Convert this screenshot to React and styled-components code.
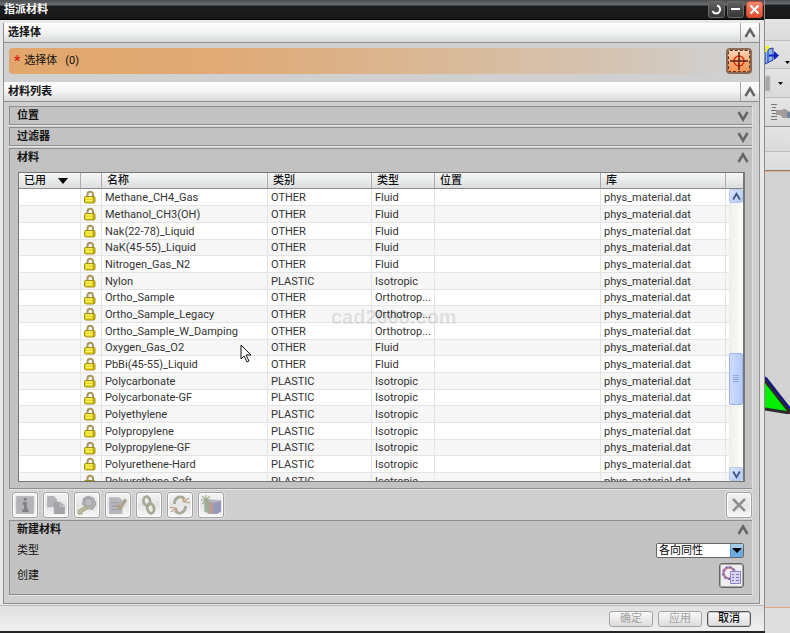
import { useState } from "react";
import styled, { createGlobalStyle, css } from "styled-components";

const GlobalStyle = createGlobalStyle`
  * {
    box-sizing: border-box;
  }

  body {
    margin: 0;
    font-family: Roboto, "Noto Sans CJK SC", sans-serif;
    font-size: 11px;
    line-height: 16px;
    color: #111;
    overflow: hidden;
  }

  button,
  select {
    font: inherit;
    color: inherit;
    margin: 0;
    padding: 0;
  }
`;

const Desktop = styled.div`
  position: relative;
  display: flex;
  height: 100vh;
  background: #242424;
`;

const Dialog = styled.main`
  flex: 1;
  min-width: 0;
  display: flex;
  flex-direction: column;
  margin-bottom: 2px;
  background: #e8e8e8;
  border-right: 1px solid #8c8c8c;
`;

const TitleBar = styled.header`
  display: flex;
  align-items: center;
  gap: 2px;
  height: 20px;
  padding: 0 1px 0 4px;
  background: linear-gradient(#4a4e50 0, #6a6e70 5px, #1c1c1c 6px, #181818 100%);
  border-bottom: 1px solid #000;
`;

const Title = styled.h1`
  flex: 1;
  margin: 0;
  font-size: 11px;
  color: #fff;
`;

const TitleButton = styled.button`
  display: grid;
  place-items: center;
  width: 17px;
  height: 17px;
  border: 1px solid ${({ $close }) => ($close ? "#c8462e" : "#6a6a6a")};
  border-radius: 3px;
  background: ${({ $close }) =>
		$close
			? "linear-gradient(#f08a70, #e04e30)"
			: "linear-gradient(#606060, #363636)"};
`;

const Body = styled.div`
  flex: 1;
  min-height: 0;
  display: flex;
  flex-direction: column;
  margin: 3px 4px 0 3px;
  border: solid #8e8e8e;
  border-width: 0 1px 1px 1px;
  background: #cfcfcf;
`;

const SectionHead = styled.div`
  display: flex;
  height: 20px;
  padding-left: 4px;
  background: linear-gradient(#fdfdfd, #f2f3f3 50%, #d6d8d9);
  border-bottom: 1px solid #8e8e8e;
`;

const Heading = styled.h2`
  flex: 1;
  margin: 0;
  font-size: 11px;
  line-height: ${({ $line }) => $line || 19}px;
`;

const FoldButton = styled.button`
  display: grid;
  place-items: center;
  width: 19px;
  border: 0;
  background: none;
  ${({ $ruled }) =>
		$ruled &&
		css`
      border-left: 1px solid #a4a4a4;
    `}
`;

const SelectArea = styled.div`
  display: flex;
  align-items: center;
  height: 39px;
  padding: 0 7px 3px 5px;
  background: #d0d0d0;
`;

const SelectBar = styled.div`
  flex: 1;
  display: flex;
  align-items: center;
  gap: 4px;
  height: 26px;
  padding-left: 5px;
  border-radius: 4px;
  background: linear-gradient(90deg, #e1a66b 0, #e0aa76 30%, #d9b999 62%, #d4c6b8 88%, #d0d0d0 100%);
`;

const Required = styled.span`
  color: #e02010;
  font-size: 14px;
  font-weight: 700;
`;

const Count = styled.span`
  margin-left: 4px;
`;

const TargetButton = styled.button`
  display: grid;
  place-items: center;
  width: 26px;
  height: 26px;
  border: 2px solid #8a6a56;
  border-radius: 4px;
  background: linear-gradient(#fbd8b8, #f8a870 60%, #f59050);
  outline: 1px dashed #5c3420;
  outline-offset: -3px;
`;

const ListArea = styled.div`
  flex: 1;
  min-height: 0;
  display: flex;
  flex-direction: column;
  padding: 4px 7px 6px 5px;
`;

const Panel = styled.section`
  display: flex;
  flex-direction: column;
  min-height: 0;
  flex: ${({ $grow }) => ($grow ? "1 1 0" : "none")};
  margin-bottom: 2px;
  padding-bottom: ${({ $foot }) => $foot || 0}px;
  background: #c2c2c2;
  border: solid #8e8e8e;
  border-width: 1px 0 1px 1px;
  box-shadow: 0 1px 0 #e6e6e6, 1px 0 0 #e0e0e0;
`;

const PanelHead = styled.div`
  display: flex;
  height: 17px;
  padding-left: 7px;
`;

const TableFrame = styled.div`
  position: relative;
  flex: 1;
  min-height: 0;
  margin: 6px 7px 6px 8px;
  overflow: hidden;
  background: #fff;
  border: 1px solid #777;
  border-right-width: 2px;
`;

const Table = styled.table`
  width: 100%;
  table-layout: fixed;
  border-collapse: separate;
  border-spacing: 0;
`;

const Col = styled.col`
  width: ${({ $w }) => ($w ? `${$w}px` : "auto")};
`;

const Th = styled.th`
  height: 16px;
  padding: 0 0 0 5px;
  line-height: 15px;
  font-weight: 500;
  text-align: left;
  white-space: nowrap;
  background: linear-gradient(#f6f7f7, #dcdedf);
  border-bottom: 1px solid #8a8a8a;

  & + & {
    border-left: 1px solid #aaa;
  }
`;

const SortMark = styled.svg`
  margin-left: 12px;
`;

const Row = styled.tr`
  height: 17px;

  &:nth-child(3n + 4) {
    height: 16px;
  }

  &:nth-child(even) {
    background: #f6f6f6;
  }
`;

const Td = styled.td`
  padding: 0 0 0 3px;
  line-height: 15px;
  color: #333;
  white-space: nowrap;
  overflow: hidden;
  border-bottom: 1px solid #e4e4e4;

  & + & {
    border-left: 1px solid #e4e4e4;
  }

  svg {
    display: block;
  }
`;

const Scrollbar = styled.div`
  position: absolute;
  top: 16px;
  right: 0;
  bottom: 0;
  width: 14px;
  display: flex;
  flex-direction: column;
  background: linear-gradient(90deg, #efeee8, #fdfdfa);
`;

const ScrollButton = styled.button`
  display: grid;
  place-items: center;
  height: 14px;
  border: 1px solid #b4c8f0;
  border-radius: 2px;
  background: linear-gradient(135deg, #dce6fe, #b4c8f8);
`;

const Track = styled.div`
  flex: ${({ $share }) => $share} 1 0;
`;

const Thumb = styled.div`
  display: grid;
  place-items: center;
  height: 52px;
  border: 1px solid #98b4ea;
  border-radius: 2px;
  background: linear-gradient(90deg, #cddcfe, #b6cbfb);
`;

const Toolbar = styled.div`
  display: flex;
  gap: 5px;
  height: 29px;
  padding: 1px 0 0 3px;
`;

const ToolButton = styled.button`
  display: grid;
  place-items: center;
  width: 26px;
  height: 26px;
  border: 1px solid #a2a2a2;
  border-radius: 3px;
  background: linear-gradient(#f4f4f4, #e4e4e4 50%, #f6f6f6);
  box-shadow: inset 0 0 0 1px #fff, 0 0 0 1px #dedede;
`;

const Spacer = styled.div`
  flex: 1;
`;

const Field = styled.div`
  display: flex;
  align-items: center;
  justify-content: space-between;
  height: 25px;
  padding: 0 8px 0 7px;
`;

const SelectWrap = styled.div`
  display: flex;
  align-items: center;
  width: 88px;
  height: 15px;
  background: #fff;
  border: 1px solid #666;
  border-radius: 2px;
`;

const Select = styled.select`
  flex: 1;
  min-width: 0;
  height: 13px;
  padding-left: 2px;
  line-height: 13px;
  color: #000;
  appearance: none;
  border: 0;
  outline: 0;
  background: none;
`;

const SelectArrow = styled.svg`
  pointer-events: none;
`;

const CreateButton = styled.button`
  display: grid;
  place-items: center;
  width: 25px;
  height: 25px;
  border: 1px solid #666;
  border-radius: 3px;
  background: #eeeef0;
  box-shadow: inset 0 0 0 1px #a8a8a8;
`;

const Footer = styled.footer`
  display: flex;
  justify-content: flex-end;
  align-items: center;
  gap: 5px;
  height: 26px;
  margin-top: 1px;
  padding-right: 13px;
  background: linear-gradient(#e0e0e0, #efefef);
  border-top: 1px solid #b8b8b8;
`;

const FooterButton = styled.button`
  width: 44px;
  height: 16px;
  line-height: 13px;
  color: #111;
  font-weight: 500;
  border: 1px solid #555;
  border-radius: 3px;
  background: linear-gradient(#fafafa, #dcdcdc);
  box-shadow: inset 0 0 0 1px #c8c8c8;

  &:disabled {
    color: #a0a0a0;
    border-color: #a4a4a4;
    box-shadow: none;
    font-weight: 400;
  }
`;

const AppStrip = styled.aside`
  width: 25px;
  display: flex;
  flex-direction: column;
  background: #d2d2d2;
`;

const StripTop = styled.div`
  height: 19px;
  background: linear-gradient(#4a4e50 0, #6a6e70 4px, #1c1c1c 5px, #181818 100%);
`;

const StripRow = styled.div`
  height: ${({ $h }) => $h}px;
  background: linear-gradient(#e4e4e4, #dadada);
  border-bottom: 1px solid ${({ $edge }) => $edge || "#bdbdbd"};

  svg {
    display: block;
  }
`;

const Viewport = styled.div`
  flex: 1;
  display: flex;
  flex-direction: column;
  justify-content: center;
  padding-top: 10px;
  border-top: 1px solid #e8b090;
  border-bottom: 1px solid #e8a080;
`;

const StripBottom = styled.div`
  height: 25px;
  background: #dedede;
`;

const Watermark = styled.div`
  position: absolute;
  left: 331px;
  top: 306px;
  font-family: "Liberation Sans", sans-serif;
  font-size: 20px;
  line-height: 22px;
  font-weight: 700;
  color: rgba(0, 0, 0, 0.1);
  pointer-events: none;
`;

const Pointer = styled.svg`
  position: absolute;
  left: 240px;
  top: 344px;
  pointer-events: none;
`;

const columns = [
	{ label: "已用", width: 61, sorted: true },
	{ label: "", width: 21 },
	{ label: "名称", width: 166 },
	{ label: "类别", width: 104 },
	{ label: "类型", width: 63 },
	{ label: "位置" },
	{ label: "库", width: 125 },
	{ label: "", width: 18 },
];

const materials = [
	["Methane_CH4_Gas", "OTHER", "Fluid"],
	["Methanol_CH3(OH)", "OTHER", "Fluid"],
	["Nak(22-78)_Liquid", "OTHER", "Fluid"],
	["NaK(45-55)_Liquid", "OTHER", "Fluid"],
	["Nitrogen_Gas_N2", "OTHER", "Fluid"],
	["Nylon", "PLASTIC", "Isotropic"],
	["Ortho_Sample", "OTHER", "Orthotrop..."],
	["Ortho_Sample_Legacy", "OTHER", "Orthotrop..."],
	["Ortho_Sample_W_Damping", "OTHER", "Orthotrop..."],
	["Oxygen_Gas_O2", "OTHER", "Fluid"],
	["PbBi(45-55)_Liquid", "OTHER", "Fluid"],
	["Polycarbonate", "PLASTIC", "Isotropic"],
	["Polycarbonate-GF", "PLASTIC", "Isotropic"],
	["Polyethylene", "PLASTIC", "Isotropic"],
	["Polypropylene", "PLASTIC", "Isotropic"],
	["Polypropylene-GF", "PLASTIC", "Isotropic"],
	["Polyurethene-Hard", "PLASTIC", "Isotropic"],
	["Polyurethene-Soft", "PLASTIC", "Isotropic"],
];

function Chevron({ down, size = 12, color = "#666", weight = 2.5 }) {
	return (
		<svg width={size} height={size} viewBox="0 0 12 12" fill="none">
			<path
				d={down ? "M1.500 2 6 9.500 10.500 2" : "M1.500 10 6 2.500 10.500 10"}
				stroke={color}
				strokeWidth={weight}
			/>
		</svg>
	);
}

function Lock() {
	return (
		<svg width="12" height="14" viewBox="0 0 12 14">
			<path d="M3.500 7V4.500a2.500 2.500 0 0 1 5.500 0V7" fill="none" stroke="#a8965a" strokeWidth="2" />
			<path d="M1 6.500h9.500l.5 1V12l-1 1H1.500L.5 12V7.500z" fill="#e8d61c" stroke="#a08c18" />
			<path d="M2 8h6M2 10.500h6" stroke="#fffa80" />
			<path d="M9.500 7v5.500" stroke="#b89c10" />
		</svg>
	);
}

const toolIcons = {
	信息: (
		<>
			<path d="M1 1h16v16H1z" fill="#b4b4b8" />
			<path d="M7 7.500h2.500V14M6.500 14H12M8 4h2.500" stroke="#808086" strokeWidth="2.500" fill="none" />
		</>
	),
	复制: (
		<>
			<path d="M1 1h6l3 3v7H1z" fill="#b2b2b7" />
			<path d="M7 6h6l4 4v7H7z" fill="#a3a3a9" />
			<path d="M13 6v4h4" stroke="#c8c8cc" fill="none" />
		</>
	),
	检查: (
		<>
			<path d="m6 3 4-2 5 2 2 5-3 5-6-1-3-4z" fill="#b2b2b6" stroke="#a4a4aa" />
			<circle cx="10.500" cy="6.500" r="3.500" fill="#bdbdc0" stroke="#9c9ca2" />
			<path d="m8 10-7 4v3h3l1-2 5-3z" fill="#c2bd98" stroke="#aca88a" />
		</>
	),
	编辑: (
		<>
			<path d="M1 2h9l3 3v12H1z" fill="#b6b6bd" />
			<path d="M3 7h7M3 10h7M3 13h7" stroke="#9c9ca4" />
			<path d="m8 9 3 3 5-8" stroke="#b0a28a" strokeWidth="3" fill="none" />
		</>
	),
	链接: (
		<g fill="none" stroke="#a7a995" strokeWidth="2.500">
			<ellipse cx="7" cy="5.500" rx="3" ry="4" transform="rotate(-12 7 5.500)" />
			<ellipse cx="10.500" cy="12" rx="3" ry="4.500" transform="rotate(-12 10.500 12)" />
		</g>
	),
	断开: (
		<>
			<path d="M4 8c0-7 8-8 9-4M14 10c0 7-8 8-9 4" fill="none" stroke="#a7a995" strokeWidth="2.500" />
			<path d="m12 6 5-3m-5 3 6 1m-6-1-1-4M6 12l-5 3m5-3-6-1m6 1 1 4" stroke="#c09a80" fill="none" />
		</>
	),
	库: (
		<>
			<path d="M3 6h5v11l-5-2z" fill="#9db397" />
			<path d="M7 6h5v11H7z" fill="#b79b94" />
			<path d="m11 6 7-1v10l-4 2h-3z" fill="#9899ba" />
			<path d="m4 6 4-2 10 1-5 2z" fill="#b5b5c8" />
			<path d="M4.500 0v9M0 4.500h9M1 1l7 7M8 1 1 8" stroke="#9da486" />
		</>
	),
};

function Fold({ open, onToggle, ruled, label }) {
	return (
		<FoldButton $ruled={ruled} onClick={onToggle} aria-expanded={!!open} aria-label={label}>
			<Chevron down={!open} />
		</FoldButton>
	);
}

function MaterialTable() {
	return (
		<TableFrame>
			<Table>
				<colgroup>
					{columns.map(({ width }, i) => (
						<Col key={i} $w={width} />
					))}
				</colgroup>
				<thead>
					<tr>
						{columns.map(({ label, sorted }, i) => (
							<Th key={i}>
								{label}
								{sorted && (
									<SortMark width="10" height="6" viewBox="0 0 10 6">
										<path d="M0 0h10L5 6z" />
									</SortMark>
								)}
							</Th>
						))}
					</tr>
				</thead>
				<tbody>
					{materials.map(([name, category, type]) => (
						<Row key={name}>
							<Td />
							<Td>
								<Lock />
							</Td>
							<Td>{name}</Td>
							<Td>{category}</Td>
							<Td>{type}</Td>
							<Td />
							<Td>phys_material.dat</Td>
							<Td />
						</Row>
					))}
				</tbody>
			</Table>
			<Scrollbar>
				<ScrollButton aria-label="向上滚动">
					<Chevron size={9} color="#3f5a86" weight={2.5} />
				</ScrollButton>
				<Track $share={150} />
				<Thumb>
					<svg width="6" height="8" viewBox="0 0 6 8">
						<path d="M0 .5h6M0 2.500h6M0 4.500h6M0 6.500h6" stroke="#8ba8e4" />
					</svg>
				</Thumb>
				<Track $share={62} />
				<ScrollButton aria-label="向下滚动">
					<Chevron down size={9} color="#3f5a86" weight={2.5} />
				</ScrollButton>
			</Scrollbar>
		</TableFrame>
	);
}

function SideStrip() {
	return (
		<AppStrip>
			<StripTop />
			<StripRow $h={22} />
			<StripRow $h={28}>
				<svg width="25" height="27" viewBox="0 0 25 27">
					<path d="m0 9 8-2v12l-8 4z" fill="#8ab8f0" stroke="#2432a8" />
					<path d="m3 8v14" fill="none" stroke="#2432a8" />
					<path d="M4 14.500h6" stroke="#1420c0" strokeWidth="2" />
					<path d="m9 10 5 4.500-5 4.500z" fill="#1420c0" />
					<path d="M0 6h4M0 11l3-4-3-2" stroke="#f0f020" strokeWidth="2" fill="none" />
					<path d="M20 20h5l-2.500 3z" fill="#000" />
				</svg>
			</StripRow>
			<StripRow $h={29}>
				<svg width="25" height="28" viewBox="0 0 25 28">
					<path d="M0 7h5v15H0z" fill="#a8a8a8" stroke="#c4c4c4" />
					<path d="M13 13h5l-2.500 3z" fill="#000" />
				</svg>
			</StripRow>
			<StripRow $h={29} $edge="#8e8e8e">
				<svg width="25" height="28" viewBox="0 0 25 28">
					<path d="M6 6.500h6M7 9.500h4M6 12.500h6M7 15.500h4M6 18.500h6M6 21.500h6" stroke="#777" />
					<path d="M11 12h5l4-1 5 3v6h-7l-3-3h-4z" fill="#a39c98" />
					<path d="M22 14h3v6h-3z" fill="#7884a8" />
				</svg>
			</StripRow>
			<StripRow $h={25} />
			<StripRow $h={19} $edge="#8a7c76" />
			<Viewport>
				<svg width="25" height="38" viewBox="0 0 25 38">
					<path d="M0 2v32l25 2z" fill="#00f000" />
					<path d="M0 3l25 32" stroke="#2a2a2a" strokeWidth="5" />
					<path d="M0 1l25 32" stroke="#14149a" strokeWidth="2" />
					<path d="M0 33l25 4" stroke="#2a2a2a" strokeWidth="3" />
				</svg>
			</Viewport>
			<StripBottom />
		</AppStrip>
	);
}

function App() {
	const [kind, setKind] = useState("各向同性");

	return (
		<Desktop>
			<GlobalStyle />
			<Dialog>
				<TitleBar>
					<Title>指派材料</Title>
					<TitleButton aria-label="重置">
						<svg width="13" height="13" viewBox="0 0 13 13" fill="none">
							<path d="M7 2.500a4 4 0 1 1-4.500 5.500" stroke="#fff" strokeWidth="2" />
						</svg>
					</TitleButton>
					<TitleButton aria-label="最小化">
						<svg width="13" height="13" viewBox="0 0 13 13">
							<path d="M2 5h9v2H2z" fill="#fff" />
						</svg>
					</TitleButton>
					<TitleButton $close aria-label="关闭">
						<svg width="13" height="13" viewBox="0 0 13 13">
							<path d="m2.500 2.500 8 8m0-8-8 8" stroke="#fff" strokeWidth="2" />
						</svg>
					</TitleButton>
				</TitleBar>
				<Body>
					<SectionHead>
						<Heading>选择体</Heading>
						<Fold open ruled label="选择体" />
					</SectionHead>
					<SelectArea>
						<SelectBar>
							<Required>*</Required>
							<span>选择体</span>
							<Count>(0)</Count>
						</SelectBar>
						<TargetButton aria-label="选择体">
							<svg width="20" height="20" viewBox="0 0 20 20" fill="none">
								<circle cx="10" cy="10" r="5" stroke="#e03010" strokeWidth="1.500" />
								<path d="M10 1v18M1 10h18" stroke="#5c2010" strokeWidth="1.500" />
							</svg>
						</TargetButton>
					</SelectArea>
					<SectionHead>
						<Heading>材料列表</Heading>
						<Fold open ruled label="材料列表" />
					</SectionHead>
					<ListArea>
						<Panel>
							<PanelHead>
								<Heading $line={17}>位置</Heading>
								<Fold label="位置" />
							</PanelHead>
						</Panel>
						<Panel>
							<PanelHead>
								<Heading $line={17}>过滤器</Heading>
								<Fold label="过滤器" />
							</PanelHead>
						</Panel>
						<Panel $grow>
							<PanelHead>
								<Heading $line={17}>材料</Heading>
								<Fold open label="材料" />
							</PanelHead>
							<MaterialTable />
						</Panel>
						<Toolbar>
							{Object.entries(toolIcons).map(([name, icon]) => (
								<ToolButton key={name} aria-label={name}>
									<svg width="20" height="20" viewBox="0 0 18 18">
										{icon}
									</svg>
								</ToolButton>
							))}
							<Spacer />
							<ToolButton aria-label="删除">
								<svg width="18" height="18" viewBox="0 0 18 18">
									<path d="m3 3 12 12M15 3 3 15" stroke="#8e8e8e" strokeWidth="2.500" />
								</svg>
							</ToolButton>
						</Toolbar>
						<Panel $foot={6}>
							<PanelHead>
								<Heading $line={17}>新建材料</Heading>
								<Fold open label="新建材料" />
							</PanelHead>
							<Field>
								<label htmlFor="kind">类型</label>
								<SelectWrap>
									<Select id="kind" value={kind} onChange={(e) => setKind(e.target.value)}>
										<option>各向同性</option>
										<option>正交各向异性</option>
									</Select>
									<SelectArrow width="13" height="13" viewBox="0 0 13 13">
										<path d="M0 0h13v13H0z" fill="#6cacdf" />
										<path d="M0 0h13v5H0z" fill="#a6cdec" />
										<path d="M0 0v13" stroke="#3470b0" />
										<path d="M2 4h10l-5 5z" />
									</SelectArrow>
								</SelectWrap>
							</Field>
							<Field>
								<span>创建</span>
								<CreateButton aria-label="创建">
									<svg width="21" height="21" viewBox="0 0 21 21" fill="none">
										<circle cx="8" cy="8" r="5.500" stroke="#d08090" strokeWidth="2.500" />
										<circle cx="8" cy="8" r="6" stroke="#6070c0" strokeDasharray="2 2" strokeWidth="2" />
										<path d="M9.500 6.500h10v12h-10z" fill="#d8d4f4" stroke="#8c84c4" />
										<path d="M11 9.500h2m2 0h3m-7 3h2m2 0h3m-7 3h2m2 0h3" stroke="#7a70b8" />
									</svg>
								</CreateButton>
							</Field>
						</Panel>
					</ListArea>
				</Body>
				<Footer>
					<FooterButton disabled>确定</FooterButton>
					<FooterButton disabled>应用</FooterButton>
					<FooterButton>取消</FooterButton>
				</Footer>
			</Dialog>
			<SideStrip />
			<Watermark>cad2008.com</Watermark>
			<Pointer width="12" height="20" viewBox="0 0 12 20">
				<path d="M1 1v14l3-3 3 6 2-1-3-6h5z" fill="#fff" stroke="#111" />
			</Pointer>
		</Desktop>
	);
}

export default App;
